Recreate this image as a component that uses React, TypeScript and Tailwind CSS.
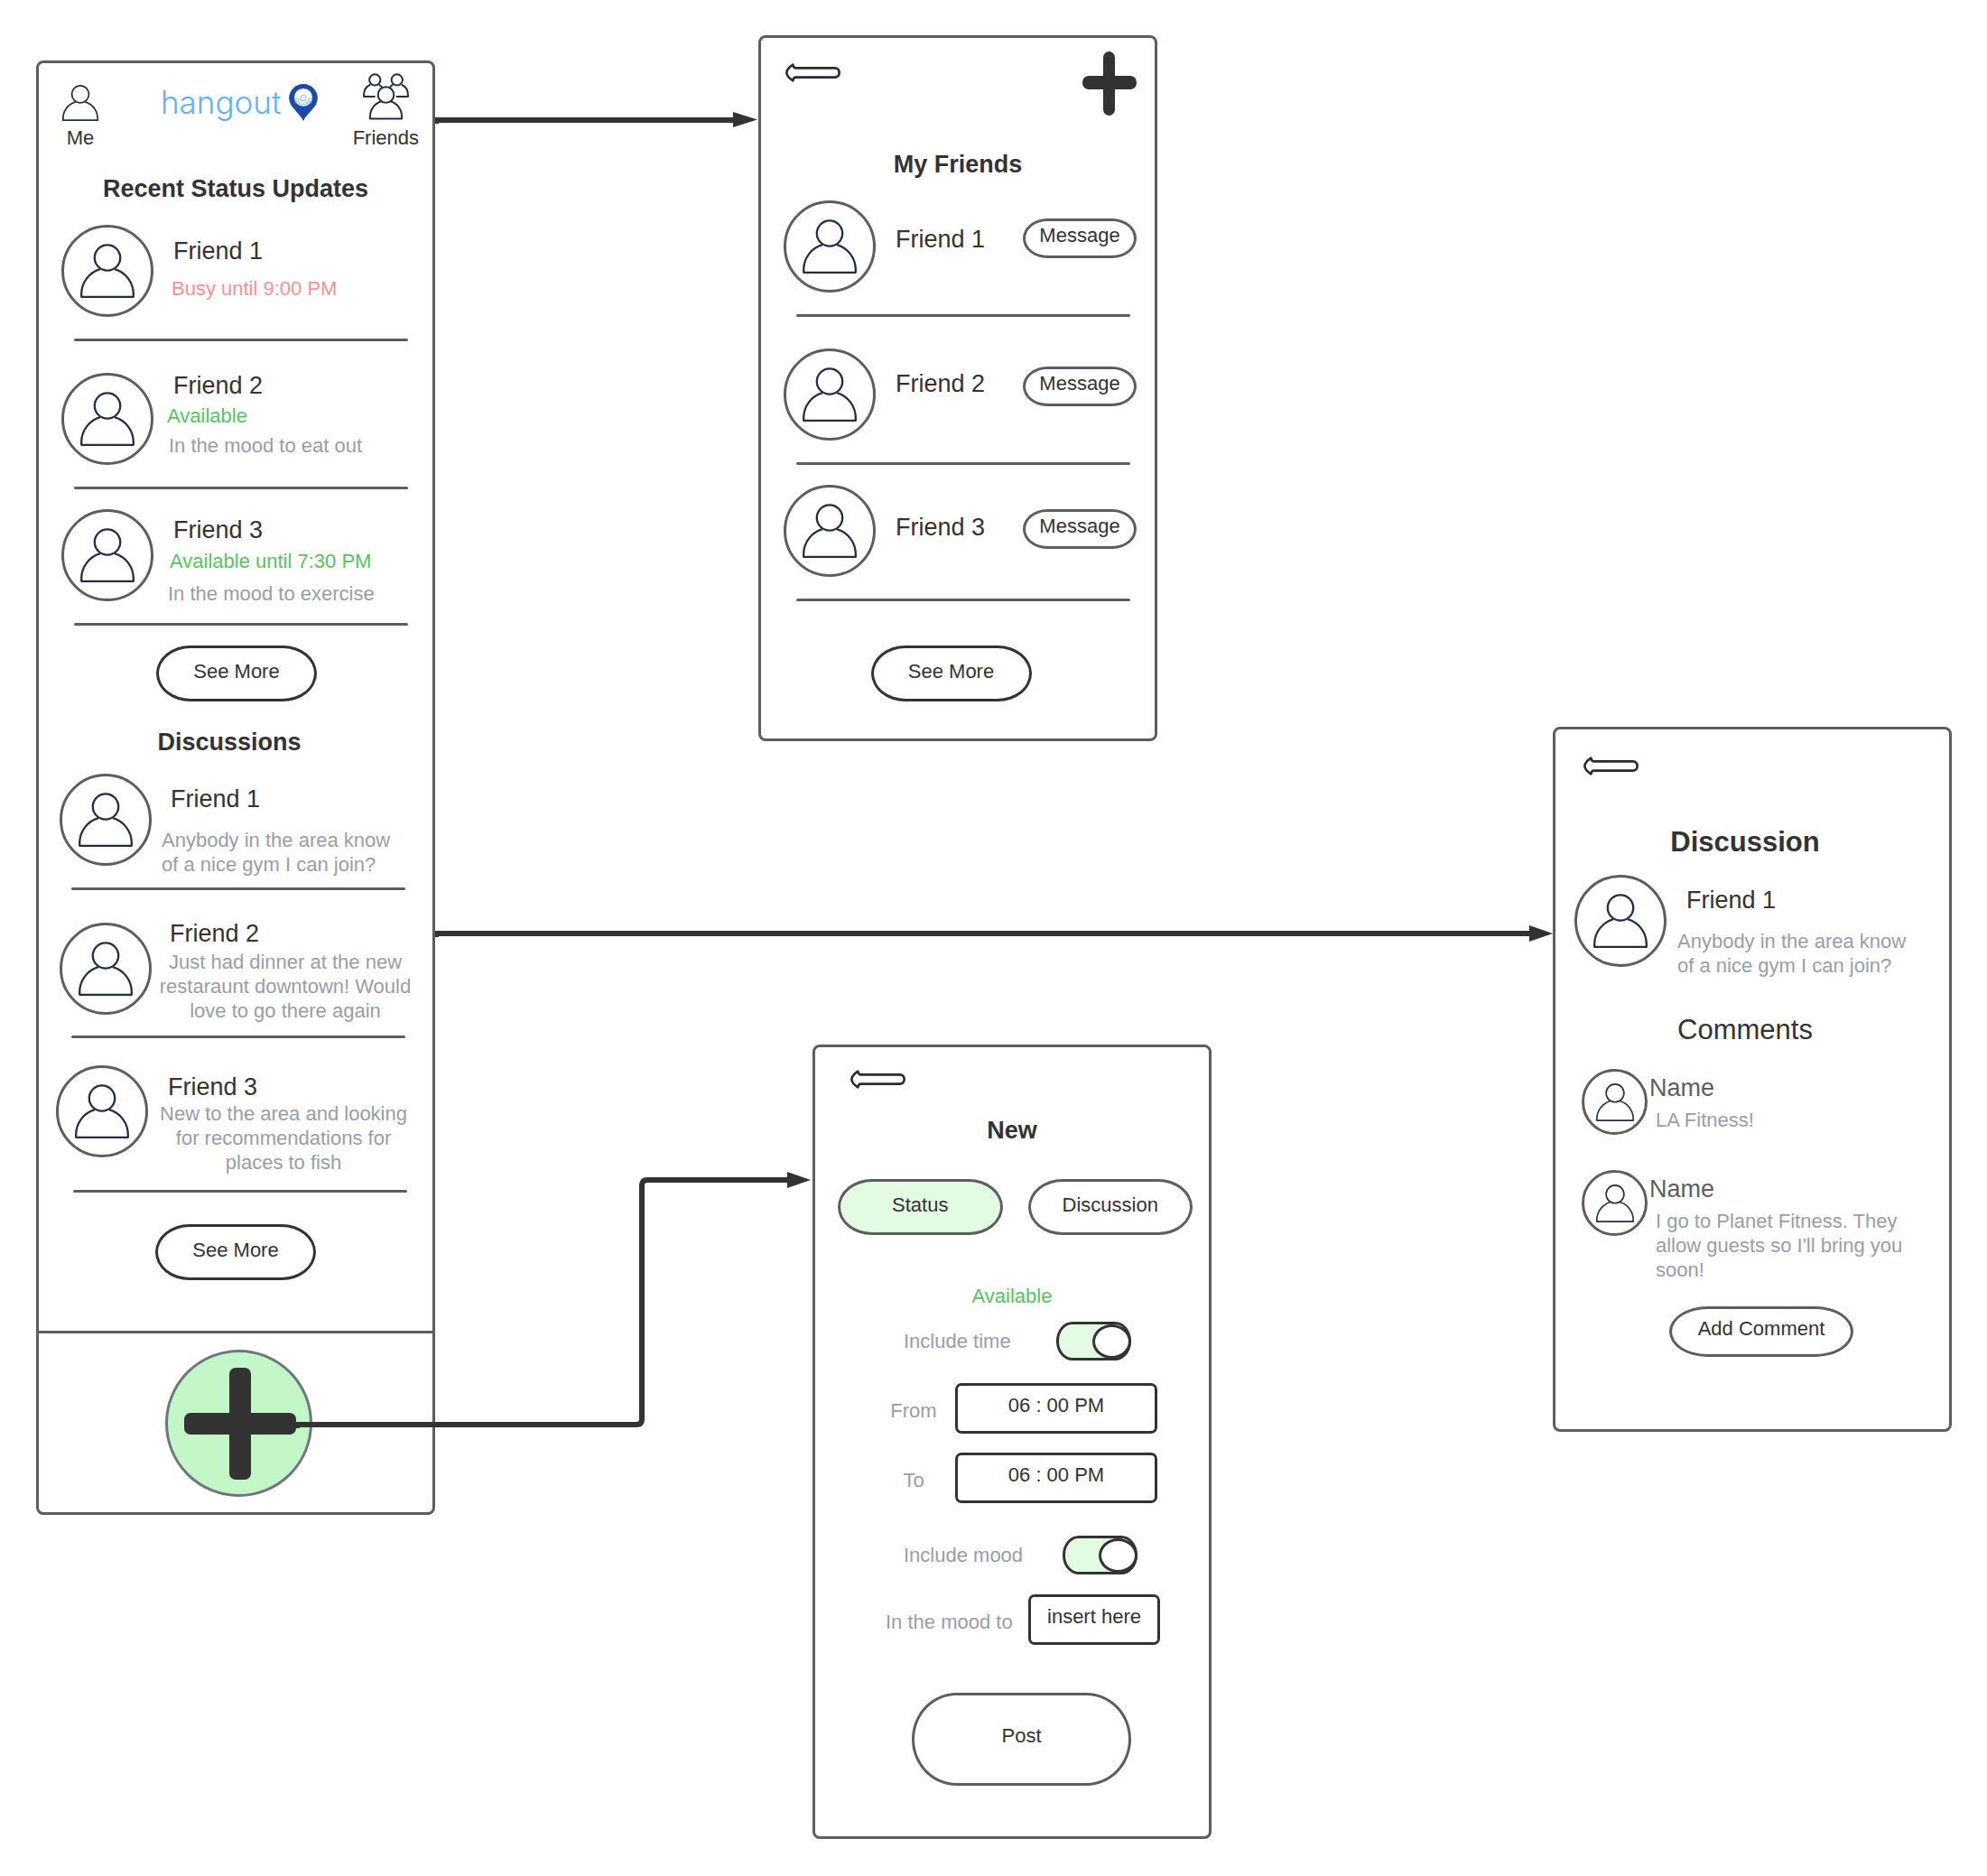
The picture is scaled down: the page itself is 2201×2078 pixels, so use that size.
import type { ReactNode } from "react";

function UserIcon({ className, stroke = 2.3 }: { className: string; stroke?: number }) {
  return (
    <svg viewBox="0 0 60 60" className={className} fill="none" stroke="#232f3e" strokeWidth={stroke} strokeLinejoin="round" aria-hidden="true">
      <circle cx="30" cy="15.5" r="14.2" />
      <path d="M38 28.2 A28.8 28.8 0 0 1 58.8 55.5 V58.8 H1.2 V55.5 A28.8 28.8 0 0 1 22 28.2" />
    </svg>
  );
}

function GroupIcon() {
  return (
    <svg viewBox="0 0 154 156" className="h-[52px] w-[51px]" fill="none" stroke="#232f3e" strokeWidth="6" strokeLinejoin="round" aria-hidden="true">
      <circle cx="40" cy="22" r="18.5" />
      <circle cx="114" cy="22" r="18.5" />
      <path d="M41 78 H3 V74 C3 57 11 44 25 38" />
      <path d="M111 78 H151 V74 C151 57 143 44 129 38" />
      <path d="M54 38 L64 46 M100 38 L90 46" />
      <circle cx="77" cy="72" r="26.5" />
      <path d="M93 94 A53 53 0 0 1 130 146 V152 H24 V146 A53 53 0 0 1 61 94" />
    </svg>
  );
}

function PinIcon() {
  return (
    <svg viewBox="0 0 96 124" className="h-[41px] w-[32px]" fill="none" aria-hidden="true">
      <path fill="#1a49a8" d="M48 124 C36 98 0 78 0 48 A48 48 0 0 1 96 48 C96 78 60 98 48 124 Z" />
      <circle cx="48" cy="45" r="30" fill="#fff" />
      <g stroke="#7cbcf2" strokeWidth="3">
        <circle cx="48" cy="47" r="9.5" />
        <path d="M34 68 C34 61 39 57 43 56 M53 56 C57 57 62 61 62 68 M32 67 H64" />
        <circle cx="26" cy="54" r="6" />
        <circle cx="70" cy="54" r="6" />
        <path d="M20 64 C22 61 24 60 27 60 Q31 61 32 65 M76 64 C74 61 72 60 69 60 Q65 61 64 65" />
      </g>
    </svg>
  );
}

function BackButton() {
  return (
    <button type="button" aria-label="Back" className="block h-[21px] w-[61px] shrink-0">
      <svg viewBox="0 0 183 63" className="h-full w-full" fill="none" stroke="#282d35" strokeWidth="8" strokeLinejoin="round" aria-hidden="true">
        <path d="M33 16 H164 C184 16 184 47 164 47 H33 Q27 48 25 58 Q5 45 4 31.500 Q5 18 25 5 Q27 15 33 16 Z" />
      </svg>
    </button>
  );
}

function Avatar({ className = "" }: { className?: string }) {
  return (
    <div className={`flex size-[102px] shrink-0 items-center justify-center rounded-full border-3 border-[#5e5e5e] ${className}`}>
      <UserIcon className="size-[60px]" />
    </div>
  );
}

function Frame({ className = "", label, children }: { className?: string; label: string; children: ReactNode }) {
  return (
    <section aria-label={label} className={`flex w-[442px] shrink-0 flex-col rounded-[8px] border-3 border-[#5e5e5e] bg-white ${className}`}>
      {children}
    </section>
  );
}

function Title({ className = "", children }: { className?: string; children: ReactNode }) {
  return <h2 className={`text-center text-[27px] leading-[32px] font-bold ${className}`}>{children}</h2>;
}

function SeeMore({ className }: { className: string }) {
  return (
    <button type="button" className={`h-[62px] w-[178px] self-center rounded-[38px/31px] border-3 border-[#333] pb-[5px] ${className}`}>
      See More
    </button>
  );
}

function Rule({ className }: { className: string }) {
  return <hr className={`h-[3px] rounded-full border-0 bg-[#5e5e5e] ${className}`} />;
}

const statuses = [
  {
    name: "Friend 1",
    row: "mt-6 min-h-[126px]",
    avatar: "",
    text: "pt-[13px]",
    lines: [{ text: "Busy until 9:00 PM", look: "mt-3 pl-[5px] text-[#ff8f8f]" }],
  },
  {
    name: "Friend 2",
    row: "mt-[33px] min-h-[128px]",
    avatar: "mt-[2px]",
    text: "",
    lines: [
      { text: "Available", look: "mt-1 text-[#54c45e]" },
      { text: "In the mood to eat out", look: "mt-[6px] pl-[2px] text-[#979ea8]" },
    ],
  },
  {
    name: "Friend 3",
    row: "mt-[22px] min-h-[126px]",
    avatar: "",
    text: "pt-[7px]",
    lines: [
      { text: "Available until 7:30 PM", look: "mt-[5px] pl-[3px] text-[#54c45e]" },
      { text: "In the mood to exercise", look: "mt-[9px] pl-px text-[#979ea8]" },
    ],
  },
];

const friends = [
  { name: "Friend 1", row: "mt-6", nameTop: "mt-[27px]", buttonTop: "mt-5" },
  { name: "Friend 2", row: "mt-[35px]", nameTop: "mt-[23px]", buttonTop: "mt-5" },
  { name: "Friend 3", row: "mt-[22px]", nameTop: "mt-[31px]", buttonTop: "mt-[27px]" },
];

function Post({ name, text, className, avatar = "", column, body }: { name: string; text: string; className: string; avatar?: string; column: string; body: string }) {
  return (
    <article className={`flex items-start ${className}`}>
      <Avatar className={avatar} />
      <div className={`w-[280px] shrink-0 ${column}`}>
        <h3 className="pl-3 text-[27px] leading-[32px]">{name}</h3>
        <p className={`text-[#979ea8] ${body}`}>{text}</p>
      </div>
    </article>
  );
}

function Comment({ name, text, className }: { name: string; text: string; className: string }) {
  return (
    <article className={`flex min-h-[74px] items-start gap-[2px] pl-[29px] ${className}`}>
      <div className="flex size-[73px] shrink-0 items-center justify-center rounded-full border-3 border-[#5e5e5e]">
        <UserIcon className="size-[42px]" stroke={2.3} />
      </div>
      <div className="pt-[5px]">
        <h4 className="text-[27px] leading-[32px] text-[#5e5e5e]">{name}</h4>
        <p className="mt-[6px] w-[286px] pl-[7px] text-[#979ea8]">{text}</p>
      </div>
    </article>
  );
}

function Toggle({ id }: { id: string }) {
  return (
    <input
      id={id}
      type="checkbox"
      role="switch"
      defaultChecked
      className="flex h-[43px] w-[83px] shrink-0 appearance-none items-center justify-end rounded-[18px/21px] border-3 border-[#333] bg-[#e3fae3] before:-mr-[3px] before:block before:h-[38px] before:w-[43px] before:rounded-[50%] before:border-3 before:border-[#333] before:bg-white before:content-['']"
    />
  );
}

function Home() {
  return (
    <Frame label="Home" className="mt-[67px]">
      <header className="flex items-end pt-[11px] pr-[15px] pl-[26px]">
        <button type="button" className="flex w-10 flex-col items-center gap-[5px]">
          <UserIcon className="size-10" stroke={2.6} />
          <span>Me</span>
        </button>
        <div className="mb-8 ml-[69px] flex items-start gap-[4px]">
          <span className="w-[138px] font-['Inter'] text-[35px] leading-[41px] font-light text-[#62b1f6]">hangout</span>
          <PinIcon />
        </div>
        <button type="button" className="ml-auto flex flex-col items-center gap-[6px]">
          <GroupIcon />
          <span>Friends</span>
        </button>
      </header>

      <Title className="mt-[27px]">Recent Status Updates</Title>
      {statuses.map((s) => (
        <div key={s.name}>
          <div className={`flex items-start gap-[15px] pl-[25px] ${s.row}`}>
            <Avatar className={s.avatar} />
            <div className={s.text}>
              <h3 className="pl-[7px] text-[27px] leading-[32px]">{s.name}</h3>
              {s.lines.map((l) => (
                <p key={l.text} className={l.look}>{l.text}</p>
              ))}
            </div>
          </div>
          <Rule className="mr-[27px] ml-[39px]" />
        </div>
      ))}
      <SeeMore className="mt-[22px] ml-[2px]" />

      <Title className="mt-[29px] pr-[14px]">Discussions</Title>
      <Post
        name="Friend 1"
        text="Anybody in the area know of a nice gym I can join?"
        className="mt-[19px] min-h-[126px] pl-[23px]"
        column="ml-[9px] pt-3"
        body="mt-4 w-[264px] pl-[2px]"
      />
      <Rule className="mr-[30px] ml-9" />
      <Post
        name="Friend 2"
        text="Just had dinner at the new restaraunt downtown! Would love to go there again"
        className="mt-8 min-h-[129px] pl-[23px]"
        avatar="mt-1"
        column="ml-2"
        body="mt-[2px] text-center"
      />
      <Rule className="mr-[30px] ml-9" />
      <Post
        name="Friend 3"
        text="New to the area and looking for recommendations for places to fish"
        className="mt-[30px] min-h-[138px] pl-[19px]"
        column="ml-[10px] pt-2"
        body="text-center"
      />
      <Rule className="mr-[28px] ml-[38px]" />
      <SeeMore className="mt-[35px]" />

      <footer className="mt-14 flex justify-center border-t-3 border-[#5e5e5e] pt-[18px] pb-[17px] pl-[6px]">
        <button type="button" aria-label="New post" className="flex size-[163px] items-center justify-center rounded-full border-3 border-[#6f7681] bg-[#c3f7c8]">
          <svg viewBox="0 0 124 124" className="ml-1 size-[124px]" fill="#333" aria-hidden="true">
            <rect x="50" y="0" width="24" height="124" rx="7" />
            <rect x="0" y="50" width="124" height="24" rx="7" />
          </svg>
        </button>
      </footer>
    </Frame>
  );
}

function MyFriends() {
  return (
    <Frame label="My friends" className="pb-[41px]">
      <header className="flex items-start justify-between pt-[15px] pr-5 pl-[27px]">
        <div className="pt-[13px]">
          <BackButton />
        </div>
        <button type="button" aria-label="Add friend">
          <svg viewBox="0 0 60 71" className="h-[71px] w-[60px]" fill="#333" aria-hidden="true">
            <rect x="23" y="0" width="13" height="71" rx="6.500" />
            <rect x="0" y="27" width="60" height="15" rx="7" />
          </svg>
        </button>
      </header>
      <Title className="mt-[38px]">My Friends</Title>
      {friends.map((f) => (
        <div key={f.name} className={f.row}>
          <div className="flex min-h-[126px] items-start pr-5 pl-[25px]">
            <Avatar />
            <h3 className={`ml-[22px] text-[27px] leading-[32px] ${f.nameTop}`}>{f.name}</h3>
            <button type="button" className={`ml-auto h-[44px] w-[126px] rounded-[27px/22px] border-3 border-[#5e5e5e] pb-[7px] ${f.buttonTop}`}>
              Message
            </button>
          </div>
          <Rule className="mr-[27px] ml-[39px]" />
        </div>
      ))}
      <SeeMore className="mt-[49px] mr-[15px]" />
    </Frame>
  );
}

const field = "rounded-[7px] border-3 border-[#333] bg-white pb-[7px] text-center outline-none";
const tab = "h-[62px] flex-1 rounded-[38px/31px] border-3 border-[#5e5e5e] pb-[5px]";

function NewPost() {
  return (
    <Frame label="New" className="mt-[336px] ml-[60px] pb-14">
      <header className="pt-[25px] pl-[39px]">
        <BackButton />
      </header>
      <Title className="mt-[30px]">New</Title>
      <div className="mt-[38px] flex gap-7 pr-[18px] pl-[25px]">
        <button type="button" className={`bg-[#e3fae3] ${tab}`}>Status</button>
        <button type="button" className={tab}>Discussion</button>
      </div>
      <form className="flex flex-col text-[#979ea8]">
        <p className="mt-[54px] text-center text-[#54c45e]">Available</p>
        <div className="mt-[15px] flex items-center justify-between pr-[86px] pl-[98px]">
          <label htmlFor="time">Include time</label>
          <Toggle id="time" />
        </div>
        <div className="mt-[25px] flex items-center gap-[18px] pr-[57px] pl-[81px]">
          <label htmlFor="from" className="w-14 shrink-0 pt-1 text-center">From</label>
          <input id="from" type="text" defaultValue="06 : 00 PM" className={`h-14 min-w-0 flex-1 text-[#333] ${field}`} />
        </div>
        <div className="mt-[21px] flex items-center gap-[18px] pr-[57px] pl-[81px]">
          <label htmlFor="to" className="w-14 shrink-0 pt-1 text-center">To</label>
          <input id="to" type="text" defaultValue="06 : 00 PM" className={`h-14 min-w-0 flex-1 text-[#333] ${field}`} />
        </div>
        <div className="mt-9 flex items-center justify-between pr-[79px] pl-[98px]">
          <label htmlFor="mood">Include mood</label>
          <Toggle id="mood" />
        </div>
        <div className="mt-[22px] flex items-center justify-between pr-[54px] pl-[78px]">
          <label htmlFor="mood-text" className="pt-1">In the mood to</label>
          <input id="mood-text" type="text" defaultValue="insert here" className={`h-14 w-[146px] text-[#333] ${field}`} />
        </div>
        <button type="button" className="mt-[53px] ml-[107px] h-[103px] w-[243px] rounded-[50px/52px] border-3 border-[#5e5e5e] pb-2 text-[#333]">
          Post
        </button>
      </form>
    </Frame>
  );
}

function Discussion() {
  return (
    <Frame label="Discussion" className="mt-[805px] pb-20">
      <header className="pt-[30px] pl-[31px]">
        <BackButton />
      </header>
      <h2 className="mt-14 pr-4 text-center text-[31px] leading-[36px] font-bold">Discussion</h2>
      <Post
        name="Friend 1"
        text="Anybody in the area know of a nice gym I can join?"
        className="mt-[18px] pl-[21px]"
        column="ml-[10px] pt-3"
        body="mt-4 w-[264px] pl-[2px]"
      />
      <h3 className="mt-10 pr-4 text-center text-[31px] leading-[36px]">Comments</h3>
      <Comment name="Name" text="LA Fitness!" className="mt-[25px]" />
      <Comment name="Name" text="I go to Planet Fitness. They allow guests so I'll bring you soon!" className="mt-[38px]" />
      <button type="button" className="mt-[27px] ml-[126px] h-[56px] w-[204px] rounded-[42px/28px] border-3 border-[#5e5e5e] pb-[7px]">
        Add Comment
      </button>
    </Frame>
  );
}

function Connectors() {
  return (
    <svg className="pointer-events-none absolute inset-0 h-full w-full overflow-visible" aria-hidden="true">
      <g fill="none" stroke="#333" strokeWidth="6">
        <path d="M482 133 H814" />
        <path d="M482 1034 H1696" />
        <path d="M328 1578 H705 Q711 1578 711 1572 V1313 Q711 1307 717 1307 H874" />
      </g>
      <g fill="#333">
        <path d="M812 124 L839 132.500 L812 141 Z" />
        <path d="M1694 1025 L1720 1034 L1694 1043 Z" />
        <path d="M872 1298 L898 1307 L872 1316 Z" />
        <path d="M482 130 h4 v7 h-4 Z M482 1031 h4 v7 h-4 Z M328 1575 h4 v7 h-4 Z" />
      </g>
    </svg>
  );
}

export default function App() {
  return (
    <main className="relative flex min-h-screen items-start bg-white pb-[38px] pl-10 font-['Liberation_Sans',Arial,sans-serif] text-[22px] leading-[27px] text-[#333]">
      <Home />
      <div className="mt-[39px] ml-[358px] flex shrink-0 flex-col items-start">
        <MyFriends />
        <NewPost />
      </div>
      <div className="ml-[378px] shrink-0">
        <Discussion />
      </div>
      <Connectors />
    </main>
  );
}
